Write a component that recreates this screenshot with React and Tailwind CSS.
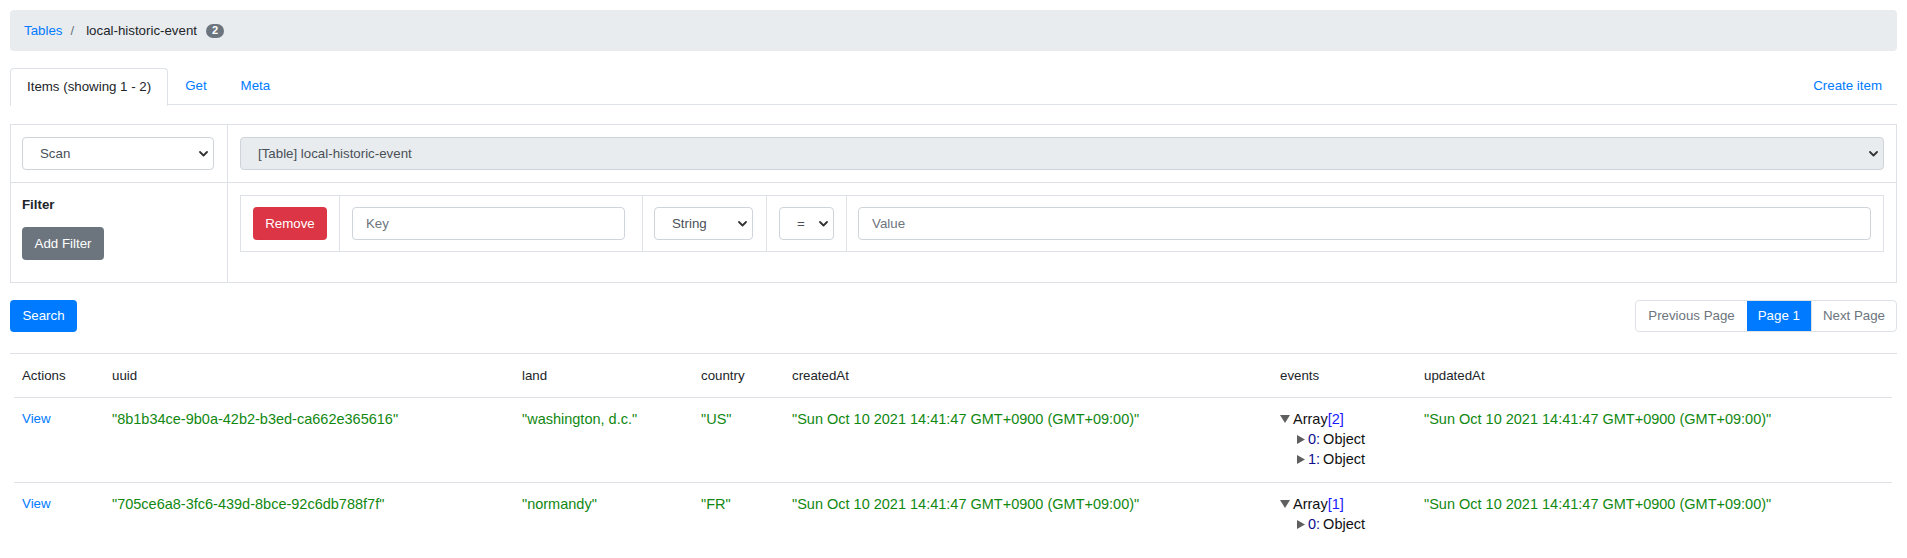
import React from "react";

const Chevron = () => (
  <svg width="9" height="6" viewBox="0 0 9 6" className="shrink-0">
    <path d="M1 1l3.5 3.5L8 1" fill="none" stroke="#333" strokeWidth="1.8" strokeLinecap="round" strokeLinejoin="round" />
  </svg>
);

const DownTri = () => (
  <svg width="10" height="8" viewBox="0 0 10 8" className="shrink-0">
    <polygon points="0,0 10,0 5,8" fill="#5f5f5f" />
  </svg>
);

const RightTri = () => (
  <svg width="8" height="9" viewBox="0 0 8 9" className="shrink-0">
    <polygon points="0,0 8,4.5 0,9" fill="#5f5f5f" />
  </svg>
);

function FakeSelect({ label, disabled, className }) {
  return (
    <div
      className={
        "flex items-center justify-between h-[33px] border border-[#ced4da] rounded-[4px] pl-[17px] pr-[5px] text-[#495057] " +
        (disabled ? "bg-[#e9ecef] " : "bg-white ") +
        (className || "")
      }
    >
      <span>{label}</span>
      <Chevron />
    </div>
  );
}

function Tree({ count }) {
  const items = Array.from({ length: count }, (_, i) => i);
  return (
    <div className="text-[14.5px] leading-[20px] text-[#111]">
      <div className="flex items-center">
        <DownTri />
        <span className="ml-[3px]">Array</span>
        <span className="text-[#1a1aff]">[{count}]</span>
      </div>
      {items.map((i) => (
        <div key={i} className="flex items-center pl-[17px]">
          <RightTri />
          <span className="ml-[3px] text-[#0c0c8c]">{i}:</span>
          <span className="ml-[3px]">Object</span>
        </div>
      ))}
    </div>
  );
}

const rows = [
  { uuid: "8b1b34ce-9b0a-42b2-b3ed-ca662e365616", land: "washington, d.c.", country: "US", count: 2 },
  { uuid: "705ce6a8-3fc6-439d-8bce-92c6db788f7f", land: "normandy", country: "FR", count: 1 },
];

const date = '"Sun Oct 10 2021 14:41:47 GMT+0900 (GMT+09:00)"';

export default function App() {
  return (
    <div className="font-['Liberation_Sans',Arial,sans-serif] text-[13.3px] leading-[20px] text-[#212529] bg-white px-[10px] pt-[10px] min-h-[558px]">
      {/* Breadcrumb */}
      <div className="flex items-center h-[41px] bg-[#e9ecef] rounded-[4px] pl-[14px]">
        <span className="text-[#007bff]">Tables</span>
        <span className="ml-[8px] text-[#6c757d]">/</span>
        <span className="ml-[12px]">local-historic-event</span>
        <span className="ml-[9px] inline-flex items-center justify-center h-[14px] min-w-[18px] px-[5px] rounded-[7px] bg-[#6c757d] text-white text-[11px] leading-none font-bold">
          2
        </span>
      </div>

      {/* Tabs */}
      <div className="mt-[17px] flex items-stretch h-[37px] border-b border-[#dee2e6]">
        <div className="flex items-center px-[16px] border border-[#dee2e6] border-b-white rounded-t-[4px] -mb-px bg-white h-[38px]">
          Items (showing 1 - 2)
        </div>
        <div className="flex items-center px-[17px] text-[#007bff]">Get</div>
        <div className="flex items-center px-[17px] text-[#007bff]">Meta</div>
        <div className="flex-1" />
        <div className="flex items-center pr-[15px] text-[#007bff]">Create item</div>
      </div>

      {/* Query box */}
      <div className="mt-[19px] grid grid-cols-[217px_1fr] border-t border-l border-[#dee2e6]">
        <div className="border-r border-b border-[#dee2e6] px-[11px] py-[12px]">
          <FakeSelect label="Scan" className="w-[192px]" />
        </div>
        <div className="border-r border-b border-[#dee2e6] px-[12px] py-[12px]">
          <FakeSelect label="[Table] local-historic-event" disabled />
        </div>
        <div className="border-r border-b border-[#dee2e6] px-[11px] pt-[12px] pb-[22px]">
          <div className="font-bold">Filter</div>
          <button className="mt-[12px] h-[33px] w-[82px] rounded-[4px] bg-[#6c757d] text-white">Add Filter</button>
        </div>
        <div className="border-r border-b border-[#dee2e6] px-[12px] pt-[12px] pb-[28px]">
          <div className="grid grid-cols-[98px_303px_124px_80px_1fr] border border-[#dee2e6]">
            <div className="pl-[12px] py-[11px]">
              <button className="h-[33px] w-[74px] rounded-[4px] bg-[#dc3545] text-white">Remove</button>
            </div>
            <div className="border-l border-[#dee2e6] pl-[12px] py-[11px]">
              <div className="h-[33px] w-[273px] border border-[#ced4da] rounded-[4px] flex items-center pl-[13px] text-[#6c757d]">Key</div>
            </div>
            <div className="border-l border-[#dee2e6] pl-[11px] pr-[13px] py-[11px]">
              <FakeSelect label="String" />
            </div>
            <div className="border-l border-[#dee2e6] pl-[12px] pr-[12px] py-[11px]">
              <FakeSelect label="=" />
            </div>
            <div className="border-l border-[#dee2e6] pl-[11px] pr-[12px] py-[11px]">
              <div className="h-[33px] border border-[#ced4da] rounded-[4px] flex items-center pl-[13px] text-[#6c757d]">Value</div>
            </div>
          </div>
        </div>
      </div>

      {/* Search + pagination */}
      <div className="mt-[17px] flex items-center justify-between">
        <button className="h-[32px] w-[67px] rounded-[4px] bg-[#007bff] text-white">Search</button>
        <div className="flex h-[32px] border border-[#dee2e6] rounded-[4px] overflow-hidden">
          <div className="flex items-center px-[12px] text-[#6c757d]">Previous Page</div>
          <div className="flex items-center px-[11px] bg-[#007bff] text-white">Page 1</div>
          <div className="flex items-center px-[11px] text-[#6c757d] border-l border-[#dee2e6]">Next Page</div>
        </div>
      </div>

      {/* Results */}
      <div className="mt-[21px] border-t border-[#dee2e6] pl-[4px] pr-[5px]">
        <table className="table-fixed w-full border-collapse">
          <colgroup>
            <col className="w-[90px]" />
            <col className="w-[410px]" />
            <col className="w-[179px]" />
            <col className="w-[91px]" />
            <col className="w-[488px]" />
            <col className="w-[144px]" />
            <col className="w-[476px]" />
          </colgroup>
          <thead>
            <tr className="border-b border-[#dee2e6]">
              {["Actions", "uuid", "land", "country", "createdAt", "events", "updatedAt"].map((h) => (
                <th key={h} className="text-left font-normal pl-[8px] pt-[12px] pb-[11px] align-top">
                  {h}
                </th>
              ))}
            </tr>
          </thead>
          <tbody>
            {rows.map((r, idx) => (
              <tr key={r.uuid} className={idx === 0 ? "border-b border-[#dee2e6] align-top" : "align-top"}>
                <td className="pl-[8px] pt-[11px] pb-[13px] text-[#007bff]">View</td>
                <td className="pl-[8px] pt-[11px] pb-[13px] text-[14.5px] text-[#118811]">"{r.uuid}"</td>
                <td className="pl-[8px] pt-[11px] pb-[13px] text-[14.5px] text-[#118811]">"{r.land}"</td>
                <td className="pl-[8px] pt-[11px] pb-[13px] text-[14.5px] text-[#118811]">"{r.country}"</td>
                <td className="pl-[8px] pt-[11px] pb-[13px] text-[14.5px] text-[#118811]">{date}</td>
                <td className="pl-[8px] pt-[11px] pb-[13px]">
                  <Tree count={r.count} />
                </td>
                <td className="pl-[8px] pt-[11px] pb-[13px] text-[14.5px] text-[#118811]">{date}</td>
              </tr>
            ))}
          </tbody>
        </table>
      </div>
    </div>
  );
}
